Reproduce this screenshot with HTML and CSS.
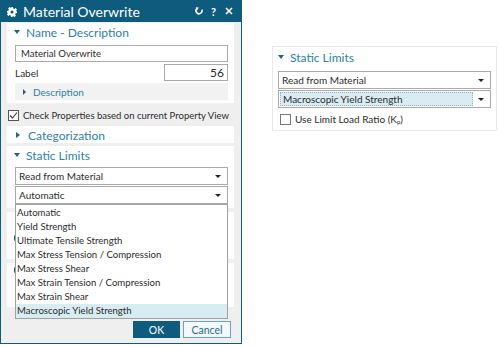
FILE: index.html
```html
<!DOCTYPE html>
<html lang="en">
<head>
  <meta charset="UTF-8" />
  <title>Material Overwrite</title>
  <link rel="stylesheet" href="styles.css">
</head>
<body>
  <div class="page">
    <div class="dialog">
      <div class="titlebar">
        <svg class="gear" width="10" height="10" viewBox="0 0 10 10">
          <path d="M4 0h2l.3 1.4 1.1.5 1.2-.8 1.4 1.4-.8 1.2.5 1.1L10 4v2l-1.4.3-.5 1.1.8 1.2-1.4 1.4-1.2-.8-1.1.5L6 10H4l-.3-1.4-1.1-.5-1.2.8L0 7.5l.8-1.2-.5-1.1L0 6V4l1.4-.3.5-1.1L1.1 1.4 2.5 0l1.2.8 1.1-.5z" fill="#fff"/>
          <circle cx="5" cy="5" r="1.6" fill="#0f5b7e"/>
        </svg>
        <span class="title">Material Overwrite</span>
        <div class="tools">
          <svg width="8" height="8" viewBox="0 0 8 8">
            <path d="M2.2 1.3A3 3 0 1 0 6.8 2.6" fill="none" stroke="#fff" stroke-width="1.6"/>
            <path d="M0.8 0.2L3.8 0.6 2 3.2z" fill="#fff"/>
          </svg>
          <span class="help">?</span>
          <svg width="8" height="8" viewBox="0 0 8 8">
            <path d="M1 1L7 7M7 1L1 7" stroke="#fff" stroke-width="1.6"/>
          </svg>
        </div>
      </div>
      <div class="content">
        <section class="panel name">
          <div class="ph"><span class="tri"></span>Name - Description</div>
          <div class="field">Material Overwrite</div>
          <div class="row">
            <span>Label</span>
            <div class="field num">56</div>
          </div>
          <div class="sub"><span class="tri small"></span>Description</div>
        </section>
        <div class="check">
          <span class="box on">
            <svg width="9" height="9" viewBox="0 0 9 9"><path d="M1 4.5L3.5 7 8 1.5" fill="none" stroke="#333" stroke-width="1.1"/></svg>
          </span>
          <span>Check Properties based on current Property View</span>
        </div>
        <section class="panel closed">
          <div class="ph"><span class="tri shut"></span>Categorization</div>
        </section>
        <section class="panel limits">
          <div class="ph"><span class="tri"></span>Static Limits</div>
          <div class="select">Read from Material<span class="arrow"></span></div>
          <div class="combo">
            <div class="select">Automatic<span class="arrow"></span></div>
            <ul class="list">
              <li>Automatic</li>
              <li>Yield Strength</li>
              <li>Ultimate Tensile Strength</li>
              <li>Max Stress Tension / Compression</li>
              <li>Max Stress Shear</li>
              <li>Max Strain Tension / Compression</li>
              <li>Max Strain Shear</li>
              <li class="hot">Macroscopic Yield Strength</li>
            </ul>
          </div>
        </section>
        <section class="panel filler"><span class="tri shut"></span></section>
        <section class="panel filler short"><span class="tri shut"></span></section>
        <div class="buttons">
          <button class="btn ok">OK</button>
          <button class="btn cancel">Cancel</button>
        </div>
      </div>
    </div>

    <div class="side">
      <section class="panel card">
        <div class="ph"><span class="tri"></span>Static Limits</div>
        <div class="select">Read from Material<span class="arrow"></span></div>
        <div class="select focus"><span class="pick">Macroscopic Yield Strength</span><span class="arrow"></span></div>
        <div class="check plain">
          <span class="box"></span>
          <span>Use Limit Load Ratio (K<sub>p</sub>)</span>
        </div>
      </section>
    </div>
  </div>
</body>
</html>
```

FILE: styles.css
```css
* {
  margin: 0;
  padding: 0;
  box-sizing: border-box;
}
html, body {
  background: #fff;
  color: #2b2b2b;
  font-family: 'Lato', sans-serif;
  font-size: 10px;
}
.page {
  display: flex;
  align-items: flex-start;
}
.dialog {
  width: 242px;
  height: 344px;
  border: 1px solid #0f5b7e;
  border-top: 0;
  background: #efefef;
  display: flex;
  flex-direction: column;
}
.titlebar {
  height: 22px;
  background: #0f5b7e;
  color: #fff;
  display: flex;
  align-items: center;
  padding: 0 8px 0 6px;
}
.gear {
  margin-top: 2px;
}
.title {
  font-size: 14px;
  margin-left: 6px;
}
.tools {
  margin-left: auto;
  display: flex;
  align-items: center;
  gap: 8px;
}
.help {
  font-weight: bold;
  font-size: 11px;
  width: 6px;
}
.content {
  flex: 1;
  padding: 1px 7px 5px 6px;
  display: flex;
  flex-direction: column;
}
.panel {
  background: #fff;
  padding: 0 6px 3px 8px;
}
.ph {
  height: 18px;
  display: flex;
  align-items: center;
  color: #2b82aa;
  font-size: 12px;
  margin-left: -1px;
}
.tri {
  width: 0;
  height: 0;
  border-left: 3.5px solid transparent;
  border-right: 3.5px solid transparent;
  border-top: 4px solid #1b6588;
  margin-right: 6px;
}
.tri.shut {
  border-top: 3.5px solid transparent;
  border-bottom: 3.5px solid transparent;
  border-left: 4px solid #1b6588;
  border-right: 0;
  margin: 0 8px 0 2px;
}
.tri.small {
  border-top: 3px solid transparent;
  border-bottom: 3px solid transparent;
  border-left: 3px solid #1b6588;
  border-right: 0;
  margin: 0 7px 0 8px;
}
.field {
  height: 17px;
  border: 1px solid #a9a9a9;
  background: #fff;
  padding: 0 5px;
  display: flex;
  align-items: center;
  margin-top: 4px;
  font-size: 9.6px;
}
.row {
  display: flex;
  align-items: center;
  justify-content: space-between;
  margin-top: 2px;
}
.row .field {
  width: 64px;
  justify-content: flex-end;
  margin-top: 0;
  font-size: 12px;
  padding-right: 3px;
}
.sub {
  height: 17px;
  background: #f2f2f2;
  color: #2b82aa;
  font-size: 10px;
  display: flex;
  align-items: center;
  margin-top: 2px;
}
.check {
  height: 18px;
  display: flex;
  align-items: center;
  gap: 4px;
  margin: 3px 0 2px 1px;
  white-space: nowrap;
  font-size: 9.5px;
}
.box {
  width: 11px;
  height: 11px;
  border: 1px solid #555;
  background: #fff;
  display: flex;
  align-items: center;
  justify-content: center;
}
.closed {
  height: 17px;
  margin-bottom: 3px;
}
.limits {
  padding-bottom: 4px;
}
.select {
  position: relative;
  height: 18px;
  border: 1px solid #a9a9a9;
  background: #fff;
  padding: 0 3px;
  display: flex;
  align-items: center;
  margin-top: 3px;
}
.combo .select {
  margin-top: 1px;
}
.arrow {
  position: absolute;
  right: 6px;
  top: 7px;
  border-left: 3px solid transparent;
  border-right: 3px solid transparent;
  border-top: 3px solid #222;
}
.combo {
  position: relative;
}
.list {
  position: absolute;
  left: 0;
  right: 0;
  top: 18px;
  z-index: 5;
  list-style: none;
  background: #fff;
  border: 1px solid #a0a0a0;
  padding-top: 1px;
  font-size: 9.6px;
}
.list li {
  height: 14px;
  line-height: 14px;
  padding-left: 1px;
}
.list li.hot {
  background: #d9ecf2;
}
.filler {
  height: 47px;
  margin-top: 4px;
  display: flex;
  align-items: center;
  padding-top: 8px;
}
.filler .tri {
  margin-left: -1px;
}
.filler.short {
  height: 44px;
  align-items: flex-start;
  padding-top: 4px;
}
.buttons {
  margin-top: auto;
  display: flex;
  justify-content: flex-end;
  gap: 3px;
  margin-right: 3px;
}
.btn {
  height: 17px;
  width: 47px;
  font-family: 'Lato', sans-serif;
  font-size: 10.5px;
  border: 1px solid #0f5b7e;
}
.ok {
  background: #0f5b7e;
  color: #fff;
}
.cancel {
  width: 48px;
  background: #f3f8fa;
  color: #2a6d8e;
  border-color: #6ea2bb;
}
.side {
  margin: 46px 0 0 30px;
}
.card {
  width: 225px;
  height: 85px;
  border: 1px solid #e8e8e8;
  padding: 0 5px;
}
.card .ph {
  margin-left: 0;
  height: 20px;
}
.card .select {
  padding-left: 3px;
  margin-top: 4px;
}
.card .select + .select {
  margin-top: 1px;
}
.card .focus {
  padding: 1px;
}
.pick {
  width: 193px;
  height: 14px;
  background: #d9ecf2;
  border: 1px dotted #8fb3c2;
  padding-left: 2px;
  display: flex;
  align-items: center;
}
.check.plain {
  height: 14px;
  margin: 4px 0 0 2px;
  font-size: 10px;
}
.check.plain .box {
  border-color: #777;
}
sub {
  font-size: 6px;
  vertical-align: -1px;
  line-height: 0;
}
```
